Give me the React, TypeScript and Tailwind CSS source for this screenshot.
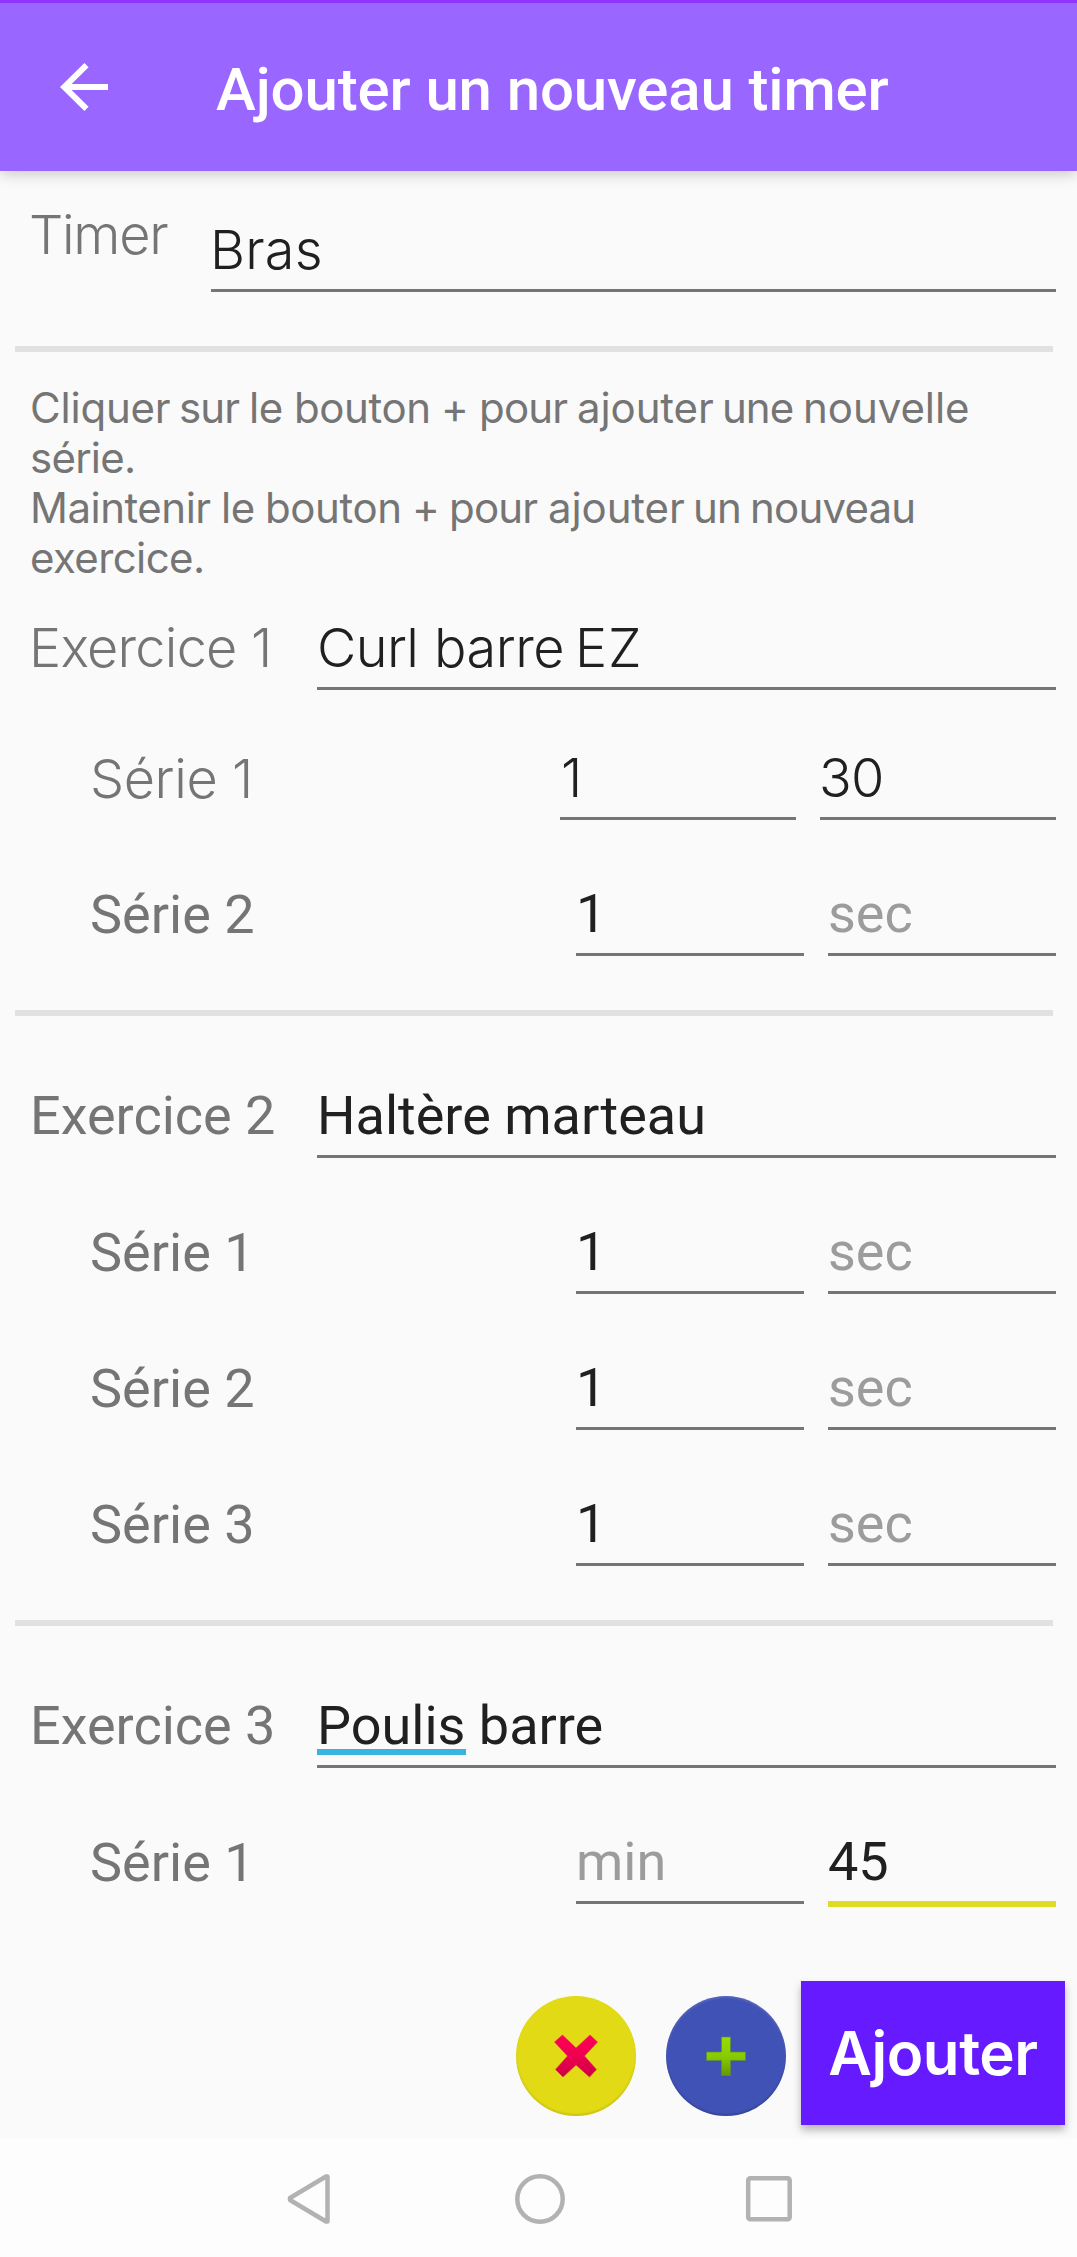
import React from "react";

const light = "font-['Inter'] font-light";
const regular = "font-['Roboto'] font-normal";

function Divider() {
  return <div className="mt-[54px] ml-[15px] h-[6px] w-[1038px] bg-[#e1e1e1]" />;
}

type FieldProps = {
  children: React.ReactNode;
  width: string;
  thin?: boolean;
  hint?: boolean;
  focused?: boolean;
};

function Field({ children, width, thin, hint, focused }: FieldProps) {
  return (
    <div
      className={`${width} shrink-0 whitespace-nowrap ${thin ? `${light} pb-[7px]` : `${regular} pb-[7px]`} ${
        hint ? "text-[#9c9c9c]" : "text-[#202020]"
      } ${focused ? "-mb-[3px] border-b-[6px] border-[#dedb23]" : "border-b-[3px] border-[#757575]"}`}
    >
      {children}
    </div>
  );
}

function Row({ children, className }: { children: React.ReactNode; className: string }) {
  return (
    <div className={`flex h-[75px] items-end justify-between pr-[21px] text-[54px] leading-[64px] ${className}`}>
      {children}
    </div>
  );
}

function SerieRow({ n, min, sec, focused }: { n: number; min?: string; sec?: string; focused?: boolean }) {
  return (
    <Row className="mt-[61px] pl-[90px]">
      <span className={`${regular} pb-[9px] text-[#757575]`}>Série {n}</span>
      <div className="flex items-end gap-[24px]">
        <Field width="w-[228px]" hint={!min}>{min ?? "min"}</Field>
        <Field width="w-[228px]" hint={!sec} focused={focused}>{sec ?? "sec"}</Field>
      </div>
    </Row>
  );
}

function ExerciceRow({ n, children }: { n: number; children: React.ReactNode }) {
  return (
    <Row className="mt-[67px] pl-[30px]">
      <span className={`${regular} pb-[10px] text-[#757575]`}>Exercice {n}</span>
      <Field width="w-[739px]">{children}</Field>
    </Row>
  );
}

export default function App() {
  return (
    <div className="flex h-[2257px] w-[1077px] flex-col overflow-hidden bg-[#fafafa] font-['Roboto',sans-serif]">
      <header className="flex h-[171px] shrink-0 items-center border-t-[3px] border-[#9033ff] bg-[#9966ff] shadow-[0_3px_14px_rgba(0,0,0,0.2)]">
        <svg className="ml-[60px] h-[48px] w-[48px]" viewBox="0 0 48 48" fill="none" stroke="#fff" strokeWidth="6">
          <path d="M48 24H6M26.5 2.2L4.2 24l22.3 21.8" />
        </svg>
        <h1 className="mt-[5px] ml-[108px] text-[60px] leading-[70px] font-medium tracking-[-0.14px] whitespace-nowrap text-white">
          Ajouter un nouveau timer
        </h1>
      </header>

      <Row className="mt-[46px] pl-[29px]">
        <span className={`${light} pb-[25px] tracking-[-1.3px] text-[#757575]`}>Timer</span>
        <Field width="w-[845px]" thin>
          <span className="-ml-px tracking-[0.2px]">Bras</span>
        </Field>
      </Row>
      <Divider />

      <div className="mt-[31px] pl-[30px] font-['Inter'] text-[42px] leading-[50px] whitespace-nowrap text-[#757575]">
        <p className="flex tracking-[-0.4px]">
          <span className="w-[149px] shrink-0 tracking-[-0.2px]">Cliquer </span>
          <span className="w-[70px] shrink-0 tracking-[-0.9px]">sur </span>
          <span className="w-[45px] shrink-0">le </span>
          <span className="w-[147px] shrink-0">bouton </span>
          <span className="w-[38px] shrink-0">+ </span>
          <span className="w-[98px] shrink-0 tracking-[-0.8px]">pour </span>
          <span className="w-[145px] shrink-0 tracking-[-0.1px]">ajouter </span>
          <span className="w-[81px] shrink-0 tracking-[-1px]">une </span>
          <span className="tracking-[-0.06px]">nouvelle</span>
        </p>
        <p className="tracking-[-0.75px]">série.</p>
        <p className="flex tracking-[-0.4px]">
          <span className="w-[191px] shrink-0 tracking-[-0.5px]">Maintenir </span>
          <span className="w-[44px] shrink-0">le </span>
          <span className="w-[147px] shrink-0">bouton </span>
          <span className="w-[37px] shrink-0">+ </span>
          <span className="w-[99px] shrink-0 tracking-[-0.8px]">pour </span>
          <span className="w-[145px] shrink-0 tracking-[-0.1px]">ajouter </span>
          <span className="w-[57px] shrink-0 tracking-[-0.9px]">un </span>
          <span className="tracking-[-0.8px]">nouveau</span>
        </p>
        <p className="tracking-[-0.6px]">exercice.</p>
      </div>

      <Row className="mt-[32px] pl-[29px]">
        <span className={`${light} pb-[10px] tracking-[-0.76px] text-[#757575]`}>Exercice 1</span>
        <Field width="w-[739px]" thin>
          <span className="flex">
            <span className="w-[117px] tracking-[-0.6px]">Curl </span>
            <span className="w-[141px] tracking-[-0.5px]">barre </span>
            <span className="tracking-[0.8px]">EZ</span>
          </span>
        </Field>
      </Row>
      <Row className="mt-[55px] pl-[90px]">
        <span className={`${light} pb-[9px] tracking-[-0.4px] text-[#757575]`}>Série 1</span>
        <div className="flex items-end gap-[24px]">
          <Field width="w-[236px]" thin><span className="ml-px">1</span></Field>
          <Field width="w-[236px]" thin><span className="-ml-px tracking-[-0.7px]">30</span></Field>
        </div>
      </Row>
      <SerieRow n={2} min="1" />
      <Divider />

      <ExerciceRow n={2}>Haltère marteau</ExerciceRow>
      <SerieRow n={1} min="1" />
      <SerieRow n={2} min="1" />
      <SerieRow n={3} min="1" />
      <Divider />

      <ExerciceRow n={3}>
        <span className="relative">
          Poulis
          <span className="absolute bottom-[2px] left-0 h-[6px] w-[149px] bg-[#38b4e0]" />
        </span>{" "}
        barre
      </ExerciceRow>
      <SerieRow n={1} sec="45" focused />

      <div className="mt-[77px] flex h-[144px] shrink-0 items-end justify-end pr-[12px]">
        <button className="mr-[30px] mb-[9px] flex size-[120px] items-center justify-center rounded-full bg-[#e2da14] shadow-[inset_0_-2px_2px_rgba(0,0,0,0.1)]">
          <svg className="size-[48px]" viewBox="0 0 48 48">
            <defs>
              <linearGradient id="cross" x1="0" y1="0" x2="0" y2="1">
                <stop offset="0" stopColor="#ff0058" />
                <stop offset="0.5" stopColor="#ee0050" />
                <stop offset="1" stopColor="#cc0044" />
              </linearGradient>
            </defs>
            <path
              d="M10.500 3L24 16L38 3L45.500 10L32.500 24L44.500 37.500L37.500 45L24 33L11 45L3.500 37.500L15.500 24L2.500 10Z"
              fill="url(#cross)"
              stroke="#d8334a"
              strokeOpacity="0.6"
              strokeWidth="1"
              strokeLinejoin="round"
            />
          </svg>
        </button>
        <button className="mr-[15px] mb-[9px] flex size-[120px] items-center justify-center rounded-full bg-[#4052b5] shadow-[inset_0_-2px_2px_rgba(0,0,0,0.15),inset_0_2px_2px_rgba(255,255,255,0.12)]">
          <svg className="size-[48px]" viewBox="0 0 48 48">
            <defs>
              <linearGradient id="plus" x1="0" y1="0" x2="0" y2="1">
                <stop offset="0" stopColor="#99dd00" />
                <stop offset="0.5" stopColor="#88cc00" />
                <stop offset="1" stopColor="#669900" />
              </linearGradient>
            </defs>
            <path
              d="M19.500 5H28.500V20H43.500V28.500H28.500V43.500H19.500V28.500H4.500V20H19.500Z"
              fill="url(#plus)"
              stroke="#5f8a3c"
              strokeOpacity="0.7"
              strokeWidth="1"
            />
          </svg>
        </button>
        <button className="flex h-[144px] w-[264px] items-center justify-center bg-[#661aff] font-['Inter'] text-[60px] leading-[72px] font-semibold tracking-[-0.45px] text-white shadow-[0_5px_8px_rgba(0,0,0,0.28)]">
          Ajouter
        </button>
      </div>

      <nav className="mt-[14px] flex h-[118px] shrink-0 bg-[#fdfdfd] pt-[34px] pl-[286px]">
        <svg className="h-[52px] w-[46px]" viewBox="0 0 46 52" fill="none" stroke="#b2b2b2" strokeWidth="4.500" strokeLinejoin="round">
          <path d="M41.500 3.500V48.500L40 48.500L4 27V25L40 3.500Z" />
        </svg>
        <svg className="ml-[183px] h-[52px] w-[52px]" viewBox="0 0 52 52" fill="none" stroke="#b2b2b2" strokeWidth="4.500">
          <circle cx="25" cy="26" r="22.700" />
        </svg>
        <svg className="ml-[178px] h-[52px] w-[50px]" viewBox="0 0 50 52" fill="none" stroke="#b2b2b2" strokeWidth="4.500">
          <rect x="3.200" y="5.200" width="41.500" height="41" rx="2" />
        </svg>
      </nav>
    </div>
  );
}
